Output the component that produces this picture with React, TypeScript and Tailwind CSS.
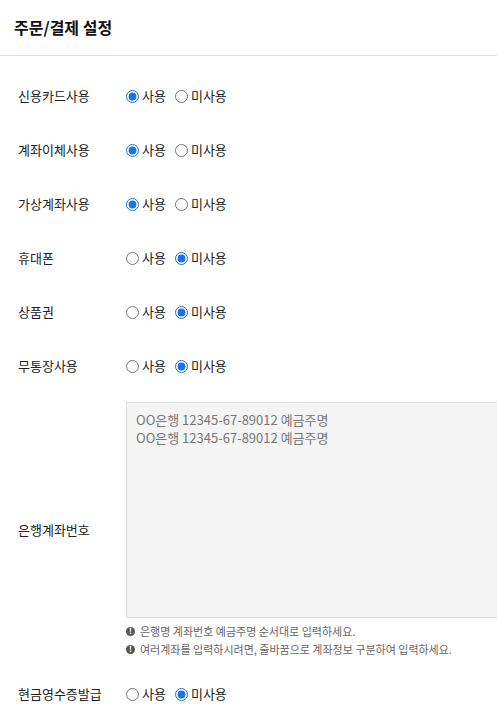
import React from 'react'

const font = { fontFamily: '"Noto Sans CJK KR", "Noto Sans", sans-serif' }

type Opt = { name: string; label: string; on: boolean }

const rows: Opt[] = [
    { name: 'card', label: '신용카드사용', on: true },
    { name: 'transfer', label: '계좌이체사용', on: true },
    { name: 'virtual', label: '가상계좌사용', on: true },
    { name: 'phone', label: '휴대폰', on: false },
    { name: 'gift', label: '상품권', on: false },
    { name: 'deposit', label: '무통장사용', on: false },
]

function RadioPair({ name, on }: { name: string; on: boolean }) {
    return (
        <div className="flex items-center text-[13px] text-[#222]">
            <label className="flex items-center">
                <input type="radio" name={name} defaultChecked={on} className="m-0 w-[13px] h-[13px] accent-[#1a73e8]" />
                <span className="ml-[3px]">사용</span>
            </label>
            <label className="flex items-center ml-[9px]">
                <input type="radio" name={name} defaultChecked={!on} className="m-0 w-[13px] h-[13px] accent-[#1a73e8]" />
                <span className="ml-[3px]">미사용</span>
            </label>
        </div>
    )
}

function Note({ children }: { children: React.ReactNode }) {
    return (
        <div className="flex items-center h-[18px] text-[11px] text-[#666]">
            <span className="w-[9px] h-[9px] rounded-full bg-[#555] text-white text-[8px] leading-none font-bold flex items-center justify-center mr-[5px]">!</span>
            {children}
        </div>
    )
}

export default function App() {
    return (
        <div className="w-[497px] min-h-[709px] bg-white overflow-hidden" style={font}>
            <div className="h-[56px] border-b border-[#ddd] flex items-center px-[14px] pb-[2px]">
                <h1 className="text-[16px] font-bold text-[#111]">주문/결제 설정</h1>
            </div>

            <div className="pt-[13px]">
                {rows.map((r) => (
                    <div key={r.name} className="h-[54px] flex items-center">
                        <div className="w-[126px] pl-[18px] text-[13px] text-[#222]">{r.label}</div>
                        <RadioPair name={r.name} on={r.on} />
                    </div>
                ))}

                {/* bank account */}
                <div className="flex items-center pt-[9px]">
                    <div className="w-[126px] pl-[18px] text-[13px] text-[#222] shrink-0">은행계좌번호</div>
                    <div className="flex-1 min-w-0">
                        <textarea
                            className="block w-[400px] h-[216px] bg-[#f4f4f4] border border-[#ddd] px-[9px] py-[8px] text-[13px] leading-[18px] text-[#777] resize-none outline-none"
                            defaultValue={'OO은행 12345-67-89012 예금주명\nOO은행 12345-67-89012 예금주명'}
                        />
                        <div className="pt-[4px]">
                            <Note>은행명 계좌번호 예금주명 순서대로 입력하세요.</Note>
                            <Note>여러계좌를 입력하시려면, 줄바꿈으로 계좌정보 구분하여 입력하세요.</Note>
                        </div>
                    </div>
                </div>

                <div className="h-[54px] mt-[9px] flex items-center">
                    <div className="w-[126px] pl-[18px] text-[13px] text-[#222]">현금영수증발급</div>
                    <RadioPair name="receipt" on={false} />
                </div>
            </div>
        </div>
    )
}
